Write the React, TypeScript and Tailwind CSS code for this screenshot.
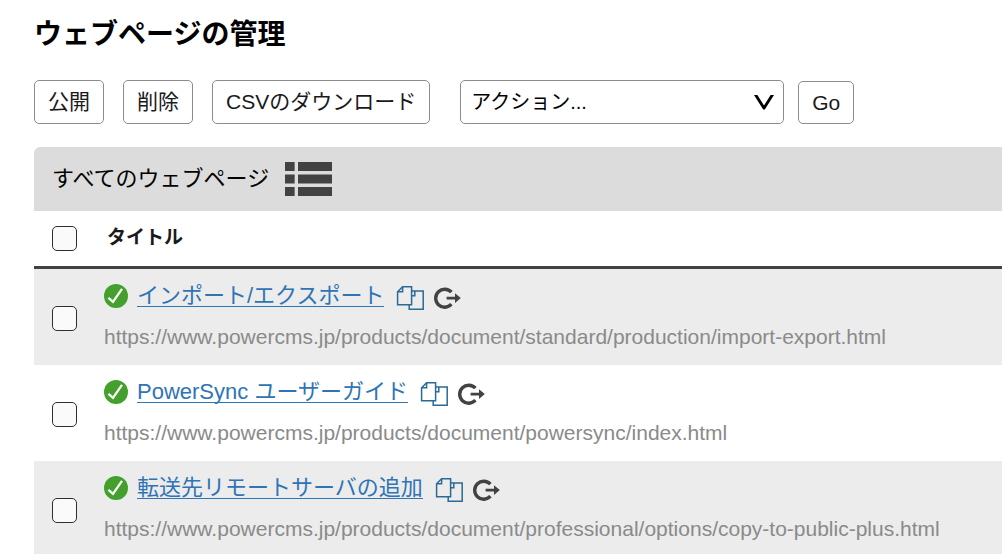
import { useState } from "react";

const pages = [
  {
    id: 1,
    title: "インポート/エクスポート",
    url: "https://www.powercms.jp/products/document/standard/production/import-export.html",
  },
  {
    id: 2,
    title: "PowerSync ユーザーガイド",
    url: "https://www.powercms.jp/products/document/powersync/index.html",
  },
  {
    id: 3,
    title: "転送先リモートサーバの追加",
    url: "https://www.powercms.jp/products/document/professional/options/copy-to-public-plus.html",
  },
];

const buttonClass =
  "h-11 rounded-[5px] border border-[#8c8c8c] bg-white px-[13px] pb-[2px] text-[21px] leading-none text-[#1a1a1a]";

const checkboxClass =
  "block size-[25px] appearance-none rounded-[5px] border border-[#2e2e2e] bg-[#fafafa] checked:bg-[#2f74b5]";

const PublishedIcon = () => (
  <svg viewBox="0 0 24 24" className="size-6 shrink-0" role="img" aria-label="公開">
    <circle cx="12" cy="12" r="12" fill="#43a02c" />
    <path d="M4.4 13.8 9 17.8 18 4.8" fill="none" stroke="#fff" strokeWidth="2.3" />
  </svg>
);

const CopyIcon = () => (
  <svg
    viewBox="0 0 28 24"
    className="h-6 w-7"
    fill="none"
    stroke="#2a6a94"
    strokeWidth="1.5"
    aria-hidden="true"
  >
    <path d="M6.6 0.8H15.6V18.8H1.6V5.8Z" />
    <path d="M6.6 0.8V5.8H1.6" />
    <path d="M15.6 5H27.2V23.2H13.2V18.8" />
    <path d="M18.8 5V9.8H15.6" />
  </svg>
);

const ViewIcon = () => (
  <svg viewBox="0 0 28 24" className="h-6 w-7" fill="none" aria-hidden="true">
    <path d="M18.4 6.2A9 9 0 1 0 18.4 18.2" stroke="#424242" strokeWidth="3.4" />
    <path d="M13.6 10.8H22V7.2L27.8 12.1 22 17V13.4H13.6Z" fill="#424242" />
  </svg>
);

const ListIcon = () => (
  <svg viewBox="0 0 47 34" className="h-[34px] w-[47px]" fill="#424242" aria-hidden="true">
    <path d="M0 0H9V9H0ZM13 0H47V9H13ZM0 12.5H9V21.5H0ZM13 12.5H47V21.5H13ZM0 25H9V34H0ZM13 25H47V34H13Z" />
    <path d="M9 0H10V9H9ZM9 12.5H10V21.5H9ZM9 25H10V34H9Z" fill="#777" />
  </svg>
);

export default function App() {
  const [selected, setSelected] = useState<number[]>([]);
  const allSelected = selected.length === pages.length;

  const toggle = (id: number) =>
    setSelected((prev) =>
      prev.includes(id) ? prev.filter((item) => item !== id) : [...prev, id],
    );

  return (
    <main className="bg-white pl-[34px] font-['Liberation_Sans','Noto_Sans_CJK_JP',sans-serif] text-black">
      <h1 className="pt-[15px] text-[28px] leading-10 font-bold">
        ウェブページの管理
      </h1>

      {/* Toolbar */}
      <form
        className="mt-[25px] flex items-end"
        onSubmit={(e) => e.preventDefault()}
      >
        <div className="flex gap-[19px]">
          <button type="button" className={buttonClass}>
            公開
          </button>
          <button type="button" className={buttonClass}>
            削除
          </button>
          <button type="button" className={buttonClass}>
            CSVのダウンロード
          </button>
        </div>
        <div className="relative ml-[30px] w-[324px]">
          <select
            aria-label="アクション"
            className="block h-11 w-full appearance-none rounded-[5px] border border-[#8c8c8c] bg-white px-[10px] text-[20px]"
          >
            <option>アクション...</option>
          </select>
          <svg
            viewBox="0 0 20 15"
            className="pointer-events-none absolute top-[15px] right-[10px] h-[15px] w-5"
            aria-hidden="true"
          >
            <path d="M0 0H3.4L10 10.4 16.6 0H20L10.8 14.4H9.2Z" />
          </svg>
        </div>
        <button
          type="submit"
          className="ml-[14px] h-[43px] rounded-[5px] border border-[#8c8c8c] bg-white px-[13px] text-[21px] leading-none text-[#1a1a1a]"
        >
          Go
        </button>
      </form>

      {/* Filter bar */}
      <div className="mt-[23px] flex h-16 items-center gap-4 rounded-tl-md bg-[#dcdcdc] pl-[18px]">
        <span className="text-[22px] leading-8">すべてのウェブページ</span>
        <button type="button" aria-label="一覧表示">
          <ListIcon />
        </button>
      </div>

      <table className="w-full border-separate border-spacing-0 text-left">
        <thead>
          <tr className="h-[58px]">
            <th className="w-[70px] border-b-[3px] border-[#424242] pl-[18px]">
              <input
                type="checkbox"
                aria-label="すべて選択"
                className={checkboxClass}
                checked={allSelected}
                onChange={() =>
                  setSelected(allSelected ? [] : pages.map((page) => page.id))
                }
              />
            </th>
            <th className="border-b-[3px] border-[#424242] pl-[3px] text-[19px] text-[#1a1a1a]">
              タイトル
            </th>
          </tr>
        </thead>
        <tbody>
          {pages.map((page) => (
            <tr key={page.id} className="h-24 odd:bg-[#ececec]">
              <td className="pt-[2px] pl-[18px]">
                <input
                  type="checkbox"
                  aria-label={page.title}
                  className={checkboxClass}
                  checked={selected.includes(page.id)}
                  onChange={() => toggle(page.id)}
                />
              </td>
              <td className="pb-[3px]">
                <div className="flex items-center">
                  <PublishedIcon />
                  <a
                    href={page.url}
                    className="ml-[9px] border-b border-[#2f74b5] text-[22px] leading-5 text-[#2f74b5]"
                  >
                    {page.title}
                  </a>
                  <a href="#copy" aria-label="複製" className="mt-1 ml-3">
                    <CopyIcon />
                  </a>
                  <a href={page.url} aria-label="表示" className="mt-1 ml-[9px]">
                    <ViewIcon />
                  </a>
                </div>
                <p className="mt-[15px] text-[21px] leading-6 text-[#8a8a8a]">
                  {page.url}
                </p>
              </td>
            </tr>
          ))}
        </tbody>
      </table>
    </main>
  );
}
